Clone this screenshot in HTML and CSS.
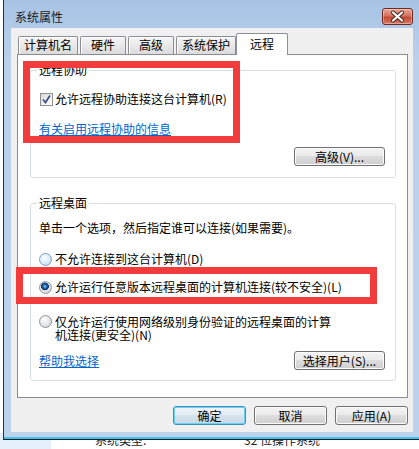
FILE: index.html
```html
<!DOCTYPE html>
<html lang="zh-CN">
<head>
    <meta charset="UTF-8">
    <meta name="viewport" content="width=device-width, initial-scale=1.0">
    <title>系统属性</title>
    <link rel="stylesheet" href="styles.css">
</head>
<body>
    <div class="window">
        <div class="titlebar">
            <span class="title">系统属性</span>
            <button class="close-button">
                <svg width="31" height="17" viewBox="0 0 31 17">
                    <path d="M11 4.5 L20 12.5 M20 4.5 L11 12.5" stroke="#47211c" stroke-width="4" stroke-linecap="round"/>
                    <path d="M11 4.5 L20 12.5 M20 4.5 L11 12.5" stroke="#fff" stroke-width="2.2" stroke-linecap="round"/>
                </svg>
            </button>
        </div>
        <div class="client">
            <div class="tabs">
                <span class="tab">计算机名</span>
                <span class="tab">硬件</span>
                <span class="tab">高级</span>
                <span class="tab">系统保护</span>
                <span class="tab tab-active">远程</span>
            </div>
            <div class="panel">
                <fieldset class="group">
                    <legend>远程协助</legend>
                    <label class="option option-first">
                        <span class="checkbox">
                            <svg width="11" height="11" viewBox="0 0 11 11">
                                <path d="M2 5.5 L4.5 8.5 L9 1.5" fill="none" stroke="#3d5385" stroke-width="1.8"/>
                            </svg>
                        </span>
                        允许远程协助连接这台计算机(R)
                    </label>
                    <a class="link assist-link" href="#">有关启用远程协助的信息</a>
                    <div class="group-row group-row-end">
                        <button class="win-button">高级(V)...</button>
                    </div>
                </fieldset>

                <fieldset class="group group-desktop">
                    <legend>远程桌面</legend>
                    <p class="hint">单击一个选项，然后指定谁可以连接(如果需要)。</p>
                    <label class="option option-none">
                        <span class="radio radio-hot"></span>
                        不允许连接到这台计算机(D)
                    </label>
                    <label class="option option-any">
                        <span class="radio radio-on"></span>
                        允许运行任意版本远程桌面的计算机连接(较不安全)(L)
                    </label>
                    <label class="option option-nla">
                        <span class="radio"></span>
                        <span class="option-text">仅允许运行使用网络级别身份验证的远程桌面的计算<br>机连接(更安全)(N)</span>
                    </label>
                    <div class="group-row">
                        <a class="link" href="#">帮助我选择</a>
                        <button class="win-button">选择用户(S)...</button>
                    </div>
                </fieldset>
            </div>
            <div class="footer">
                <button class="win-button footer-button default-button">确定</button>
                <button class="win-button footer-button">取消</button>
                <button class="win-button footer-button">应用(A)</button>
            </div>

            <div class="mark mark-assist"></div>
            <div class="mark mark-desktop"></div>
        </div>
    </div>
    <div class="behind">
        <span class="behind-label">系统类型:</span>
        <span>32 位操作系统</span>
    </div>
</body>
</html>
```

FILE: styles.css
```css
* {
    box-sizing: border-box;
}
body {
    margin: 0;
    width: 419px;
    height: 449px;
    overflow: hidden;
    background: #fff;
    font-family: "Noto Sans CJK SC", sans-serif;
    font-size: 12px;
    line-height: 14px;
    color: #000;
}
.window {
    position: relative;
    z-index: 1;
    width: 417px;
    margin-left: 3px;
    padding: 0 7px 7px 7px;
    background: linear-gradient(#a7c3e4, #bad1ec 60px, #bcd3ed);
    border-left: 1px solid #23303d;
    border-bottom: 1px solid #17222c;
    box-shadow: inset 0 -2px 0 #48c2e6;
}
.titlebar {
    height: 28px;
    display: flex;
    justify-content: space-between;
    align-items: flex-start;
}
.title {
    padding: 10px 0 0 4px;
    color: #1b1b1b;
}
.close-button {
    margin-top: 8px;
    width: 31px;
    height: 17px;
    padding: 0;
    border: 1px solid #6e2a22;
    border-radius: 3px;
    background: linear-gradient(#e8a595, #d37462 45%, #c24a36 55%, #d77a62);
    box-shadow: inset 0 0 0 1px rgba(255, 255, 255, 0.35);
    display: flex;
    align-items: center;
    justify-content: center;
}
.close-button svg {
    display: block;
    margin: -1px;
}
.client {
    position: relative;
    background: #f0f0f0;
    padding: 5px 5px 7px 6px;
}
.tabs {
    display: flex;
    align-items: flex-end;
    gap: 2px;
    height: 21px;
    padding-left: 1px;
}
.tab {
    height: 18px;
    min-width: 46px;
    padding: 1px 5px 0;
    text-align: center;
    border: 1px solid #8c8e94;
    border-bottom: none;
    border-radius: 2px 2px 0 0;
    background: linear-gradient(#f5f5f5, #e9e9e9 50%, #dbdbdb);
    box-shadow: inset 1px 1px 0 #fff;
}
.tab-active {
    position: relative;
    z-index: 1;
    height: 22px;
    min-width: 52px;
    margin-left: -2px;
    margin-bottom: -1px;
    padding-top: 3px;
    background: #fff;
    box-shadow: none;
}
.panel {
    background: #fff;
    border: 1px solid #898c95;
    padding: 8px 11px 16px 12px;
}
.group {
    margin: 0;
    min-width: 0;
    padding: 0 10px 11px 8px;
    border: 1px solid #d5dfe5;
    border-radius: 3px;
}
.group legend {
    padding: 0 2px;
    margin-left: -2px;
    line-height: 14px;
}
.group-desktop {
    margin-top: 18px;
    padding-bottom: 10px;
}
.option {
    display: flex;
    align-items: center;
}
.option-first {
    margin-top: 15px;
}
.checkbox {
    width: 13px;
    height: 13px;
    margin: 0 2px 0 1px;
    border: 1px solid #8f8f8f;
    background: linear-gradient(135deg, #d8d8d8, #f6f6f6 70%, #fff);
    display: flex;
    align-items: center;
    justify-content: center;
}
.link {
    display: block;
    color: #0066cc;
    text-decoration: underline;
}
.assist-link {
    margin-top: 16px;
    width: max-content;
}
.group-row {
    display: flex;
    justify-content: space-between;
    align-items: center;
    margin-top: 10px;
}
.group-row-end {
    justify-content: flex-end;
    margin-top: 11px;
}
.win-button {
    height: 19px;
    width: 91px;
    padding: 0;
    font: inherit;
    line-height: 15px;
    color: #000;
    border: 1px solid #707070;
    border-radius: 3px;
    background: linear-gradient(#f3f3f3, #ebebeb 45%, #dddddd 50%, #cfcfcf);
    box-shadow: inset 0 0 0 1px #fbfbfb;
}
.hint {
    margin: 11px 0 0;
}
.radio {
    width: 13px;
    height: 13px;
    margin-right: 3px;
    border-radius: 50%;
    border: 1px solid #8e959c;
    background: radial-gradient(circle at 40% 35%, #ffffff, #e2e2e2 60%, #c8c8c8);
    flex: none;
}
.radio-hot {
    border-color: #7d9fc2;
    background: radial-gradient(circle at 40% 35%, #ffffff, #d8ebfa 55%, #a9cbeb);
}
.radio-on {
    background:
        radial-gradient(circle at 45% 40%, #8fd0fa 0, #2b72bd 1.6px, #0d2f5c 3.6px, transparent 4.2px),
        radial-gradient(circle at 40% 35%, #ffffff, #e2e2e2 60%, #c4c4c4);
}
.option-none {
    margin-top: 17px;
}
.option-any {
    margin-top: 14px;
}
.option-nla {
    margin-top: 21px;
    align-items: flex-start;
    line-height: 13px;
}
.footer {
    display: flex;
    justify-content: flex-end;
    gap: 8px;
    margin-top: 8px;
}
.footer-button {
    width: 73px;
}
.default-button {
    border-color: #3c8fc4;
    background: linear-gradient(#eef4f9, #e3ecf3 45%, #d6e3ee 50%, #cad9e6);
    box-shadow: inset 0 0 0 1px #6ad3f5;
}
.mark {
    position: absolute;
    border: 7px solid #f23b3b;
}
.mark-assist {
    left: 12px;
    top: 33px;
    width: 217px;
    height: 82px;
}
.mark-desktop {
    left: 5px;
    top: 239px;
    width: 361px;
    height: 37px;
}
.behind {
    display: flex;
    height: 16px;
    margin-top: -7px;
    background: linear-gradient(90deg, #e6f0fb 51px, #fff 51px);
    color: #1e1e1e;
}
.behind-label {
    margin-left: 95px;
    width: 149px;
}
```
